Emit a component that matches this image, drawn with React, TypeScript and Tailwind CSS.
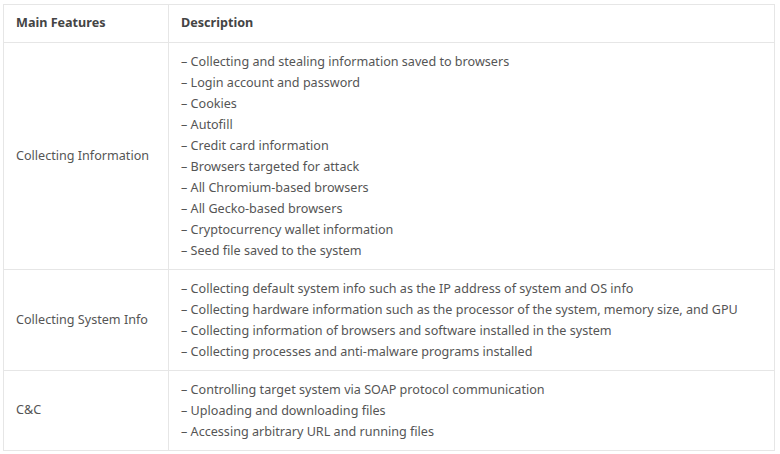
const rows: { feature: string; items: string[] }[] = [
  {
    feature: 'Collecting Information',
    items: [
      'Collecting and stealing information saved to browsers',
      'Login account and password',
      'Cookies',
      'Autofill',
      'Credit card information',
      'Browsers targeted for attack',
      'All Chromium-based browsers',
      'All Gecko-based browsers',
      'Cryptocurrency wallet information',
      'Seed file saved to the system',
    ],
  },
  {
    feature: 'Collecting System Info',
    items: [
      'Collecting default system info such as the IP address of system and OS info',
      'Collecting hardware information such as the processor of the system, memory size, and GPU',
      'Collecting information of browsers and software installed in the system',
      'Collecting processes and anti-malware programs installed',
    ],
  },
  {
    feature: 'C&C',
    items: [
      'Controlling target system via SOAP protocol communication',
      'Uploading and downloading files',
      'Accessing arbitrary URL and running files',
    ],
  },
]

export default function App() {
  return (
    <div className="h-[454px] w-[780px] bg-white px-[3px] pt-[4px] font-['Noto_Sans',sans-serif] text-[12.6px] text-[#555]">
      <table className="w-[772px] border-collapse border border-[#e6e6e6]">
        <thead>
          <tr className="h-[38px]">
            <th className="w-[165px] border border-[#e6e6e6] px-3 text-left font-bold text-[#444]">Main Features</th>
            <th className="border border-[#e6e6e6] px-3 text-left font-bold text-[#444]">Description</th>
          </tr>
        </thead>
        <tbody>
          {rows.map(row => (
            <tr key={row.feature}>
              <td className="border border-[#e6e6e6] px-3 align-middle">{row.feature}</td>
              <td className="border border-[#e6e6e6] px-3 py-[8px] leading-[21px]">
                {row.items.map(item => (
                  <div key={item}>– {item}</div>
                ))}
              </td>
            </tr>
          ))}
        </tbody>
      </table>
    </div>
  )
}
